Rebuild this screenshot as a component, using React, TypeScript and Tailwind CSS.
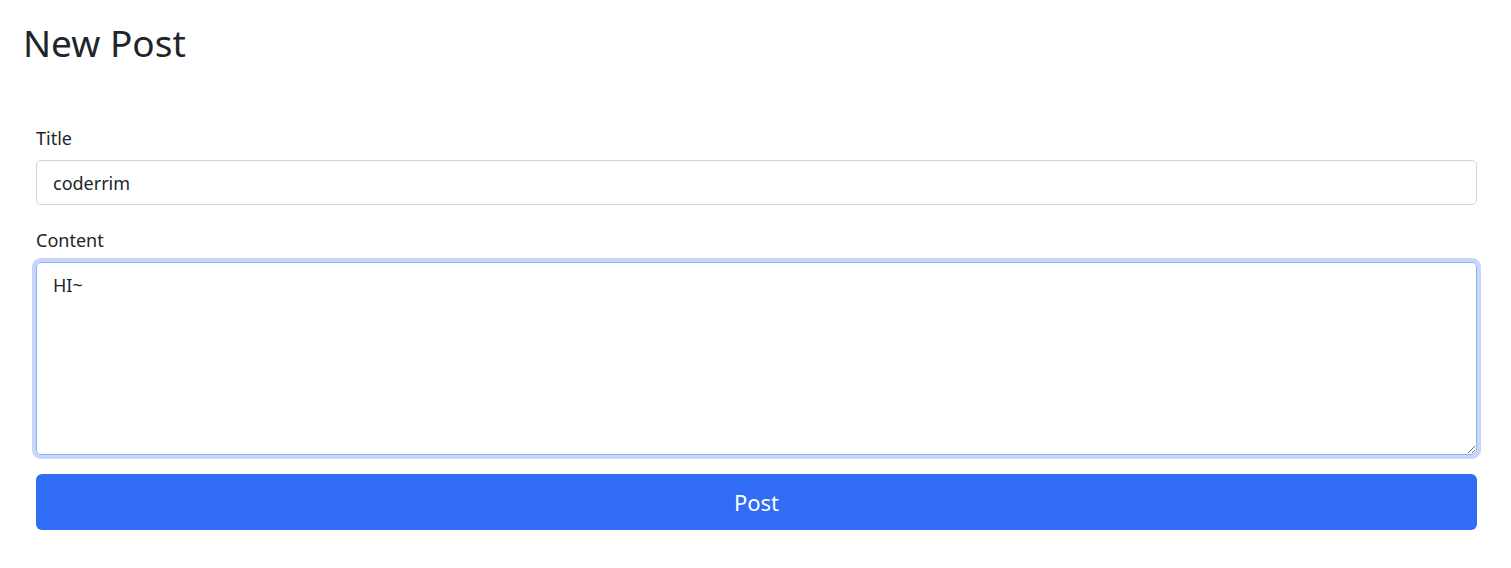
import { useState } from "react";

export default function App() {
  const [title, setTitle] = useState("coderrim");
  const [content, setContent] = useState("HI~");

  return (
    <div
      className="min-h-screen bg-white pl-[23px] pr-[23px] pt-[20px] text-[#212529]"
      style={{ fontFamily: '"Noto Sans", "Open Sans", sans-serif' }}
    >
      <h1 className="text-[37px] leading-[46px] font-normal">New Post</h1>

      <form
        className="ml-[13px] mr-[11px] mt-[60px] flex flex-col"
        onSubmit={(e) => e.preventDefault()}
      >
        <label className="mb-[10px] text-[18px] leading-[24px]">Title</label>
        <input
          type="text"
          value={title}
          onChange={(e) => setTitle(e.target.value)}
          className="h-[45px] w-full rounded-[5px] border border-[#ced4da] px-[16px] text-[18px] outline-none"
        />

        <label className="mt-[23px] mb-[10px] text-[18px] leading-[24px]">
          Content
        </label>
        <textarea
          value={content}
          onChange={(e) => setContent(e.target.value)}
          className="h-[193px] w-full rounded-[5px] border border-[#8fb0f7] px-[16px] py-[10px] text-[18px] leading-[24px] shadow-[0_0_0_4px_#c8d6fb] outline-none"
        />

        <button
          type="submit"
          className="mt-[19px] h-[56px] w-full rounded-[6px] bg-[#316cf4] text-[22px] text-white"
        >
          Post
        </button>
      </form>
    </div>
  );
}
